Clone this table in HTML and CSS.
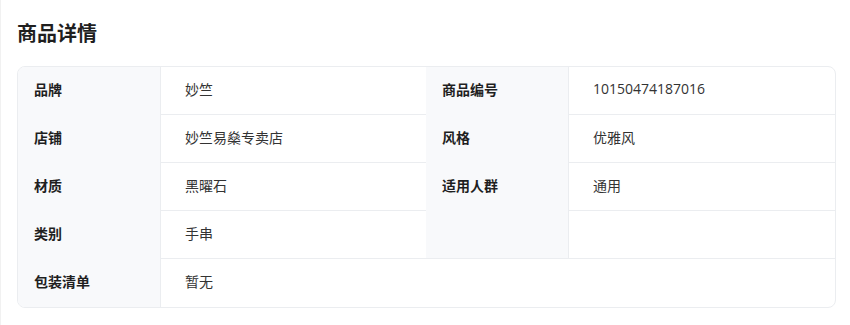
FILE: index.html
```html
<!DOCTYPE html>
<html lang="zh-CN">
<head>
<meta charset="utf-8">
<title>商品详情</title>
<link rel="stylesheet" href="styles.css">
</head>
<body>
<section class="panel">
  <h2 class="title">商品详情</h2>
  <div class="specs">
    <div class="label">品牌</div>
    <div class="value">妙竺</div>
    <div class="label">商品编号</div>
    <div class="value">10150474187016</div>

    <div class="label">店铺</div>
    <div class="value">妙竺易燊专卖店</div>
    <div class="label">风格</div>
    <div class="value">优雅风</div>

    <div class="label">材质</div>
    <div class="value">黑曜石</div>
    <div class="label">适用人群</div>
    <div class="value">通用</div>

    <div class="label">类别</div>
    <div class="value">手串</div>
    <div class="label label-closed"></div>
    <div class="value"></div>

    <div class="label">包装清单</div>
    <div class="value value-wide">暂无</div>
  </div>
</section>
</body>
</html>
```
FILE: styles.css
```css
html, body {
  margin: 0;
  padding: 0;
  background: #ffffff;
}

body {
  font-family: "Open Sans", "Noto Sans CJK SC", "Noto Sans", sans-serif;
  color: #333333;
  height: 325px;
  box-sizing: border-box;
  border-left: 1px solid #f1f1f1;
}

.panel {
  padding: 0 15px 0 16px;
}

.title {
  margin: 20px 0 18px;
  font-size: 20px;
  line-height: 28px;
  font-weight: 700;
  color: #1f1f1f;
}

.specs {
  display: grid;
  grid-template-columns: 143px 265px 143px 1fr;
  grid-auto-rows: 48px;
  width: 819px;
  box-sizing: border-box;
  border: 1px solid #ebedf0;
  border-radius: 8px;
  overflow: hidden;
  font-size: 14px;
}

.label,
.value {
  display: flex;
  align-items: center;
  box-sizing: border-box;
  height: 48px;
  padding-bottom: 4px;
}

.label {
  background: #f8f9fb;
  border-right: 1px solid #ebedf0;
  padding-left: 16px;
  font-weight: 700;
  color: #1f1f1f;
}

.label-closed {
  border-bottom: 1px solid #ebedf0;
}

.value {
  border-bottom: 1px solid #ebedf0;
  padding-left: 24px;
  color: #333333;
}

.value-wide {
  grid-column: span 3;
  border-bottom: none;
}
```
